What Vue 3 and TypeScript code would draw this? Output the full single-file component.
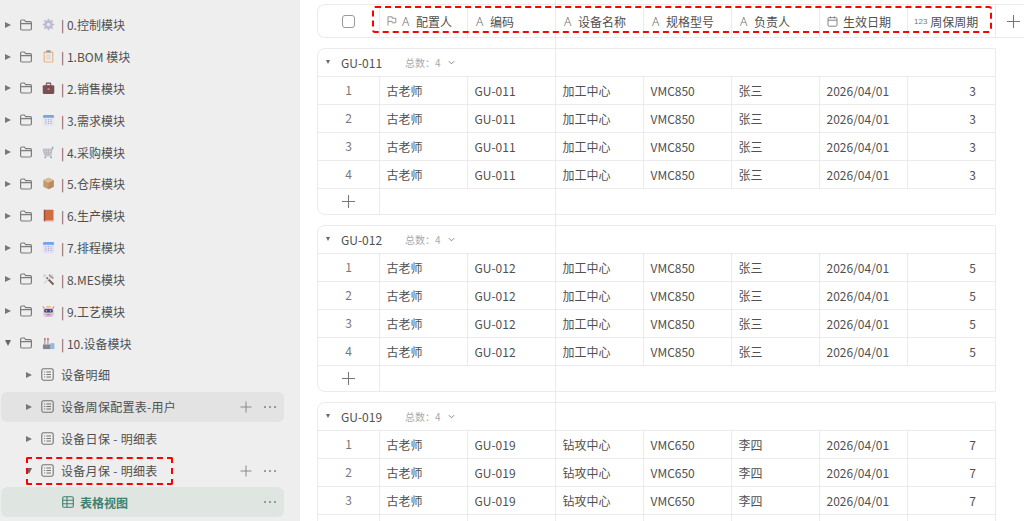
<script setup lang="ts">
interface Mod { label: string; icon: string; open?: boolean }
const modules: Mod[] = [
  { label: '| 0.控制模块', icon: 'gear' },
  { label: '| 1.BOM 模块', icon: 'clip' },
  { label: '| 2.销售模块', icon: 'case' },
  { label: '| 3.需求模块', icon: 'cal' },
  { label: '| 4.采购模块', icon: 'cart' },
  { label: '| 5.仓库模块', icon: 'box' },
  { label: '| 6.生产模块', icon: 'book' },
  { label: '| 7.排程模块', icon: 'cal2' },
  { label: '| 8.MES模块', icon: 'tools' },
  { label: '| 9.工艺模块', icon: 'robot' },
  { label: '| 10.设备模块', icon: 'factory', open: true },
]
const sheets = [
  { label: '设备明细' },
  { label: '设备周保配置表-用户', hover: true, actions: true },
  { label: '设备日保 - 明细表' },
  { label: '设备月保 - 明细表', open: true, actions: true },
]
const columns = [
  { label: '配置人', icon: 'text', flag: true },
  { label: '编码', icon: 'text' },
  { label: '设备名称', icon: 'text' },
  { label: '规格型号', icon: 'text' },
  { label: '负责人', icon: 'text' },
  { label: '生效日期', icon: 'date' },
  { label: '周保周期', icon: 'num' },
]
const groups = [
  { code: 'GU-011', name: '加工中心', spec: 'VMC850', owner: '张三', cycle: 3, shown: 4 },
  { code: 'GU-012', name: '加工中心', spec: 'VMC850', owner: '张三', cycle: 5, shown: 4 },
  { code: 'GU-019', name: '钻攻中心', spec: 'VMC650', owner: '李四', cycle: 7, shown: 3 },
]
</script>

<template>
  <div class="app">
    <aside class="side">
      <div v-for="m in modules" :key="m.label" class="row">
        <span class="caret" :class="{ down: m.open }"></span>
        <svg class="folder" viewBox="0 0 14 14" fill="none" stroke="#7c7c7c" stroke-width="1.2">
          <path d="M1.6 3.2q0-1.2 1.2-1.2h2.6l1.2 1.6h4.6q1.2 0 1.2 1.2v6q0 1.2-1.2 1.2H2.8q-1.2 0-1.2-1.2zM1.6 5.6h10.8" />
        </svg>
        <svg class="emoji" viewBox="0 0 14 14">
          <template v-if="m.icon === 'gear'">
            <circle cx="7" cy="7" r="4.6" fill="#bdb9d2" />
            <path d="M7 .8v12.4M.8 7h12.4M2.6 2.6l8.8 8.8M11.4 2.6l-8.8 8.8" stroke="#bdb9d2" stroke-width="1.8" />
            <circle cx="7" cy="7" r="2" fill="#e6e4ee" />
          </template>
          <template v-else-if="m.icon === 'clip'">
            <rect x="1.8" y="1.5" width="10.4" height="12" rx="1" fill="#e8b27e" />
            <rect x="3" y="3" width="8" height="9.4" fill="#f1eeea" />
            <rect x="4.6" y=".4" width="4.8" height="2.4" rx=".6" fill="#9a9aa6" />
            <path d="M4.4 5.5h5.2M4.4 7.5h5.2M4.4 9.5h5.2" stroke="#c5c5cc" stroke-width=".8" />
          </template>
          <template v-else-if="m.icon === 'case'">
            <rect x="4.6" y="1.2" width="4.8" height="3" rx=".7" fill="none" stroke="#6d4a4e" stroke-width="1.1" />
            <rect x=".8" y="3.4" width="12.4" height="9.4" rx="1.2" fill="#7a4f55" />
            <rect x="6" y="6.8" width="2" height="1.8" fill="#d79a66" />
          </template>
          <template v-else-if="m.icon === 'cal'">
            <rect x="1" y="1" width="12" height="12.2" rx="1.6" fill="#e6e7f3" />
            <path d="M1 2.6Q1 1 2.6 1h8.8Q13 1 13 2.6V4H1z" fill="#7aa3e0" />
            <path d="M3.6 6.2h6.8M3.6 8.2h6.8M3.6 10.2h6.8" stroke="#9c9eba" stroke-width="1" stroke-dasharray="1.2 1.6" />
          </template>
          <template v-else-if="m.icon === 'cart'">
            <path d="M1.2 3.4h9.6l-1 5.6H2.6z" fill="#d8d8dc" stroke="#a8a8ae" stroke-width=".8" />
            <path d="M1.8 5.2h8.6M2.2 7.1h8M4.4 3.4l.3 5.6M7.3 3.4l-.3 5.6" stroke="#a8a8ae" stroke-width=".6" />
            <path d="M10.8 3.4l1.2-2.6" stroke="#6f9fd2" stroke-width="1.2" />
            <path d="M2.8 10.5h7.6" stroke="#a8a8ae" stroke-width=".9" />
            <circle cx="3.6" cy="12.2" r="1" fill="#6f9fd2" /><circle cx="9.8" cy="12.2" r="1" fill="#6f9fd2" />
          </template>
          <template v-else-if="m.icon === 'box'">
            <path d="M7 .8l5.6 2.8v6.8L7 13.2l-5.6-2.8V3.6z" fill="#c79a6e" />
            <path d="M1.4 3.6L7 6.4l5.6-2.8L7 .8z" fill="#dfbb93" />
            <path d="M7 6.4v6.8l5.6-2.8V3.6z" fill="#b78a60" />
          </template>
          <template v-else-if="m.icon === 'book'">
            <rect x="2" y=".8" width="10.4" height="12.4" rx=".8" fill="#cf6d41" />
            <rect x="2" y=".8" width="1.5" height="12.4" fill="#a54c34" />
            <path d="M3.5 12.2h8.9v1H3.5z" fill="#e6bfd0" />
          </template>
          <template v-else-if="m.icon === 'cal2'">
            <rect x="1" y="1" width="12" height="12.2" rx="1.6" fill="#e2dff4" />
            <path d="M1 2.6Q1 1 2.6 1h8.8Q13 1 13 2.6V4H1z" fill="#6ea6ee" />
            <path d="M3.6 6.2h6.8M3.6 8.2h6.8M3.6 10.2h6.8" stroke="#aaa6cc" stroke-width="1" stroke-dasharray="1.2 1.6" />
          </template>
          <template v-else-if="m.icon === 'tools'">
            <path d="M5 5l7.4 7.4" stroke="#7a5650" stroke-width="2" />
            <path d="M11.6 1.6L2 11.4" stroke="#d4d4da" stroke-width="1.6" />
            <path d="M8 1.2l5 4-1.5 1.6-4.6-4z" fill="#a2a2aa" />
            <circle cx="3" cy="3" r="2" fill="#d8d8de" />
          </template>
          <template v-else-if="m.icon === 'robot'">
            <path d="M1 1.6l1.8 2.6M13 1.6l-1.8 2.6" stroke="#d87a94" stroke-width="1.3" />
            <rect x="1.4" y="3" width="11.2" height="10" rx="3.6" fill="#dfc0d6" />
            <rect x="2.4" y="4.4" width="9.2" height="3.8" rx="1.6" fill="#3f4a66" />
            <circle cx="4.8" cy="6.3" r=".8" fill="#9fe0ea" /><circle cx="9.2" cy="6.3" r=".8" fill="#9fe0ea" />
            <rect x="4.5" y="1" width="5" height="1.6" rx=".5" fill="#e8c06c" />
            <rect x="5" y="10" width="4" height="1" fill="#8a7f9c" />
          </template>
          <template v-else>
            <rect x="1" y="8" width="8.4" height="5" fill="#85858f" />
            <rect x="2.2" y="1.2" width="1.6" height="7" fill="#a8a8b2" />
            <rect x="5.6" y="1.2" width="1.6" height="7" fill="#a8a8b2" />
            <path d="M2.2 1.2h1.6v2.2H2.2zM5.6 1.2h1.6v2.2H5.6z" fill="#d86d86" />
            <rect x="9" y="6.6" width="4.4" height="6.4" fill="#8fbbe0" />
          </template>
        </svg>
        <span class="mod-label">{{ m.label }}</span>
      </div>
      <div v-for="s in sheets" :key="s.label" class="row sub" :class="{ hover: s.hover }">
        <span class="caret" :class="{ down: s.open }"></span>
        <svg class="sheet" viewBox="0 0 13 13" fill="none" stroke="#737373" stroke-width="1.1">
          <rect x=".8" y=".8" width="11.4" height="11.4" rx="1.6" />
          <path d="M3.1 4h1M5.4 4h4.6M3.1 6.5h1M5.4 6.5h4.6M3.1 9h1M5.4 9h4.6" />
        </svg>
        <span class="sub-label">{{ s.label }}</span>
        <template v-if="s.actions">
          <svg class="plus" viewBox="0 0 12 12" stroke="#8a8a8a" stroke-width="1"><path d="M6 .5v11M.5 6h11" /></svg>
          <span class="dots"><i></i><i></i><i></i></span>
        </template>
      </div>
      <div class="row view">
        <svg class="grid-icon" viewBox="0 0 12 12" fill="none" stroke="#3f8070" stroke-width="1.1">
          <rect x=".7" y=".7" width="10.6" height="10.6" rx="1.4" />
          <path d="M.7 4.2h10.6M.7 7.8h10.6M5 .7v10.6" />
        </svg>
        <span class="view-label">表格视图</span>
        <span class="dots"><i></i><i></i><i></i></span>
      </div>
    </aside>

    <main class="main">
      <div class="head">
        <div class="num-col head-check"><span class="check"></span></div>
        <div v-for="c in columns" :key="c.label" class="head-cell">
          <svg v-if="c.flag" class="flag" viewBox="0 0 10 10" fill="none" stroke="#8a8a8a" stroke-width=".9">
            <path d="M1 9.6V.8h4.2v1.4h3.6v4.6H5.2V5.4H1" />
          </svg>
          <span v-if="c.icon === 'text'" class="glyph">A</span>
          <svg v-else-if="c.icon === 'date'" class="date" viewBox="0 0 11 11" fill="none" stroke="#777" stroke-width=".9">
            <rect x="1" y="1.6" width="9" height="8.6" rx="1.2" />
            <path d="M1 4.2h9M3.4.4v2M7.6.4v2" />
          </svg>
          <span v-else class="num-glyph">123</span>
          <span class="head-label">{{ c.label }}</span>
        </div>
        <div class="head-add">
          <svg class="add" viewBox="0 0 12 12" stroke="#777" stroke-width="1"><path d="M6 0v12M0 6h12" /></svg>
        </div>
      </div>

      <section v-for="g in groups" :key="g.code" class="group">
        <div class="group-head">
          <span class="mini-caret"></span>
          <span class="group-code">{{ g.code }}</span>
          <span class="total">总数：4</span>
          <svg class="chev" viewBox="0 0 8 5" fill="none" stroke="#777" stroke-width="1"><path d="M1 1l3 3 3-3" /></svg>
        </div>
        <div v-for="n in g.shown" :key="n" class="line">
          <div class="num-col num">{{ n }}</div>
          <div class="cell">古老师</div>
          <div class="cell">{{ g.code }}</div>
          <div class="cell">{{ g.name }}</div>
          <div class="cell">{{ g.spec }}</div>
          <div class="cell">{{ g.owner }}</div>
          <div class="cell">2026/04/01</div>
          <div class="cell right">{{ g.cycle }}</div>
        </div>
        <div v-if="g.shown < 4" class="line">
          <div class="num-col"></div>
          <div v-for="i in 7" :key="i" class="cell"></div>
        </div>
        <div v-else class="add-line">
          <div class="num-col">
            <svg class="add" viewBox="0 0 12 12" stroke="#777" stroke-width="1"><path d="M6 0v12M0 6h12" /></svg>
          </div>
          <div class="add-rest"></div>
        </div>
      </section>
    </main>

    <div class="divider"></div>
    <div class="mark mark-head"></div>
    <div class="mark mark-side"></div>
  </div>
</template>

<style scoped>
.app {
  position: relative;
  display: flex;
  width: 1024px;
  height: 521px;
  overflow: hidden;
  background: #fff;
  font-family: "Noto Sans CJK SC", "Noto Sans", sans-serif;
  font-size: 12px;
  color: #505050;
}
.side {
  flex: 0 0 300px;
  box-sizing: border-box;
  padding: 9.7px 16px 0 1px;
  background: #eeeeee;
}
.row {
  display: flex;
  align-items: center;
  height: 30px;
  margin-bottom: 1.85px;
  padding-left: 4px;
  border-radius: 6px;
}
.caret {
  flex: none;
  width: 0;
  height: 0;
  border-left: 6px solid #777;
  border-top: 3.5px solid transparent;
  border-bottom: 3.5px solid transparent;
}
.caret.down {
  border-left: 3px solid transparent;
  border-right: 3px solid transparent;
  border-top: 6px solid #666;
  border-bottom: 0;
}
.folder { flex: none; width: 14px; height: 14px; margin-left: 8px; }
.emoji { flex: none; width: 13px; height: 13px; margin-left: 9px; }
.mod-label { margin-left: 6px; white-space: pre; }
.sub { padding-left: 25px; }
.sub.hover { background: #e3e3e3; }
.sheet { flex: none; width: 13px; height: 13px; margin-left: 9px; }
.sub-label { margin-left: 7px; white-space: pre; letter-spacing: 0.3px; }
.plus { flex: none; width: 12px; height: 12px; margin-left: auto; }
.dots { display: flex; gap: 3px; margin-left: 12px; margin-right: 8px; }
.dots i { width: 2px; height: 2px; border-radius: 50%; background: #808080; }
.view { padding-left: 61px; background: #dfe6e2; }
.grid-icon { flex: none; width: 12px; height: 12px; }
.view-label { margin-left: 6px; font-weight: 700; color: #3f8070; }
.view .dots { margin-left: auto; }

.main {
  flex: 1;
  min-width: 0;
  padding: 4px 0 0 17px;
}
.head {
  display: flex;
  height: 34px;
  box-sizing: border-box;
  border: 1px solid #ebebeb;
  border-right: 0;
  border-radius: 8px 0 0 8px;
}
.num-col {
  flex: none;
  width: 61px;
  box-sizing: border-box;
  display: flex;
  align-items: center;
  justify-content: center;
}
.check {
  width: 13px;
  height: 13px;
  box-sizing: border-box;
  border: 1px solid #999;
  border-radius: 3px;
  background: #fff;
}
.head-cell {
  flex: none;
  width: 88px;
  box-sizing: border-box;
  display: flex;
  align-items: center;
  padding-left: 8px;
  border-left: 1px solid #ebebeb;
}
.head-add {
  flex: 1;
  display: flex;
  align-items: center;
  padding-left: 11px;
  border-left: 1px solid #ebebeb;
}
.flag { flex: none; width: 10px; height: 10px; margin: 0 5px 0 -1px; }
.glyph { width: 8px; font-family: "Noto Sans", sans-serif; font-weight: 300; font-size: 12px; color: #707070; }
.date { flex: none; width: 11px; height: 11px; margin-left: -1px; }
.num-glyph { margin-left: -2px; font-family: "Liberation Sans", sans-serif; font-size: 8px; color: #777; }
.head-label { margin-left: 6px; white-space: pre; }
.date + .head-label { margin-left: 5px; }
.num-glyph + .head-label { margin-left: 3px; }
.add { display: block; width: 13px; height: 13px; flex: none; }

.group {
  width: 679px;
  box-sizing: border-box;
  margin-top: 10px;
  border: 1px solid #ebebeb;
  border-radius: 8px 0 0 8px;
}
.group-head {
  display: flex;
  align-items: center;
  height: 28px;
  box-sizing: border-box;
  padding: 0 0 0 8px;
  border-bottom: 1px solid #ebebeb;
}
.mini-caret {
  width: 0;
  height: 0;
  border-left: 2.5px solid transparent;
  border-right: 2.5px solid transparent;
  border-top: 4px solid #666;
  margin-top: -2px;
}
.group-code { margin-left: 11px; width: 64px; }
.total { font-size: 10px; color: #aaa; }
.chev { width: 7px; height: 5px; margin-left: 7px; }
.line {
  display: flex;
  height: 28px;
  box-sizing: border-box;
  border-bottom: 1px solid #ebebeb;
}
.num { color: #777; padding-bottom: 3px; }
.cell {
  flex: none;
  width: 88px;
  box-sizing: border-box;
  padding-left: 6.5px;
  line-height: 28px;
  border-left: 1px solid #ebebeb;
}
.cell.right { padding: 0 19px 0 0; text-align: right; }
.add-line { display: flex; height: 25px; }
.add-rest { flex: 1; border-left: 1px solid #ebebeb; }

.divider {
  position: absolute;
  left: 555px;
  top: 0;
  bottom: 0;
  width: 1px;
  background: #ebebeb;
}
.mark {
  position: absolute;
  box-sizing: border-box;
  border: 2px dashed #f00;
  border-radius: 3px;
}
.mark-head { left: 372px; top: 6px; width: 619.5px; height: 26.5px; }
.mark-side { left: 26px; top: 457px; width: 147px; height: 27.5px; border-radius: 2px; }
</style>

<style>
html, body { margin: 0; overflow: hidden; }
</style>
